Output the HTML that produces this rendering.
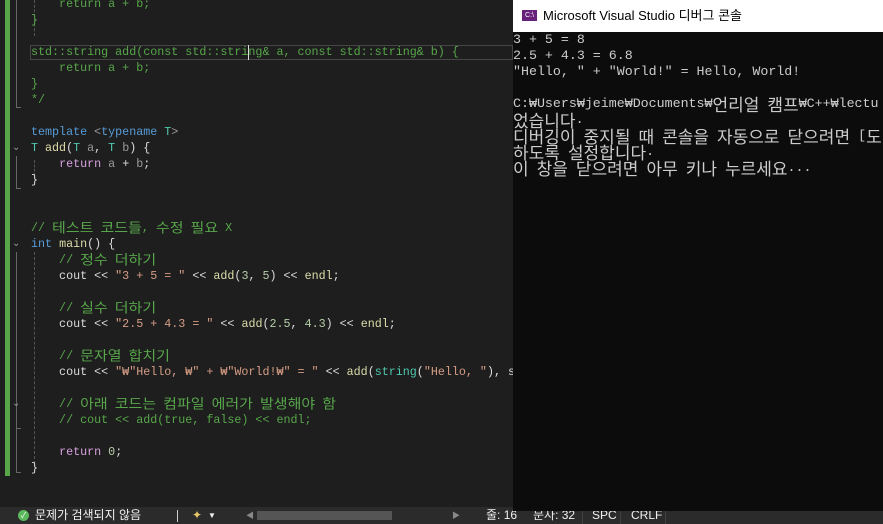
<!DOCTYPE html>
<html><head><meta charset="utf-8"><style>
*{margin:0;padding:0;box-sizing:border-box}
body{width:883px;height:524px;background:#1e1e1e;overflow:hidden;position:relative;font-family:"Liberation Mono","Noto Sans CJK KR",monospace}
.l{position:absolute;left:31px;white-space:pre;font-size:11.7px;line-height:16px;height:16px;color:#dcdcdc}
.k{font-family:"Noto Sans CJK KR",sans-serif;font-size:15px;line-height:16px;display:inline-block;height:16px;vertical-align:top;transform:scaleY(0.9)}
.c{color:#57a64a}.kw{color:#569cd6}.t{color:#4ec9b0}.f{color:#dcdcaa}.s{color:#d69d85}.p{color:#9a9a9a}.r{color:#d8a0df}.n{color:#b5cea8}
.bar{position:absolute;left:5px;top:0;width:5px;height:476px;background:#57a64a}
.vg{position:absolute;border-left:1px dashed #555}
.fold{position:absolute;left:16px;width:1px;background:#666}
.chev{position:absolute;left:12px;color:#999;font-size:10px;font-family:"DejaVu Sans",sans-serif}
#con{position:absolute;left:513px;top:0;width:370px;height:511px;background:#0c0c0c;overflow:hidden}
#tt{position:absolute;left:0;top:0;width:370px;height:32px;background:#fff;color:#000;font-family:"Liberation Sans","Noto Sans CJK KR",sans-serif;font-size:13px;line-height:32px;padding-left:30px}
#ico{position:absolute;left:9px;top:10px;width:15px;height:11px;background:#68217a;color:#fff;font-size:7px;line-height:11px;text-align:center;font-family:"Liberation Sans",sans-serif}
.cl{position:absolute;left:0;white-space:pre;color:#cccccc;font-size:13.3px;line-height:16px;height:16px}
.ck{font-family:"Noto Sans CJK KR",sans-serif;font-size:17px;line-height:16px;display:inline-block;height:16px;vertical-align:top}
#st{position:absolute;left:0;top:507px;width:883px;height:17px;background:#2b2b2b;color:#f1f1f1;font-family:"Liberation Sans","Noto Sans CJK KR",sans-serif;font-size:12px;line-height:17px}
#st span{position:absolute;top:0}
</style></head><body>
<div class="bar"></div>
<div class="fold" style="top:0;height:108px"></div><div style="position:absolute;left:16px;top:107px;width:5px;border-top:1px solid #666"></div>
<div class="fold" style="top:156px;height:33px"></div><div style="position:absolute;left:16px;top:188px;width:5px;border-top:1px solid #666"></div>
<div class="fold" style="top:252px;height:220px"></div><div style="position:absolute;left:16px;top:472px;width:5px;border-top:1px solid #666"></div>
<div class="fold" style="top:412px;height:36px"></div><div style="position:absolute;left:16px;top:428px;width:5px;border-top:1px solid #666"></div>
<div class="vg" style="left:34px;top:0;height:36px"></div>
<div class="vg" style="left:34px;top:160px;height:16px"></div>
<div class="vg" style="left:34px;top:252px;height:212px"></div>
<div class="chev" style="top:142px">&#8964;</div>
<div class="chev" style="top:238px">&#8964;</div>
<div class="chev" style="top:398px">&#8964;</div>
<div style="position:absolute;left:30px;top:45px;width:483px;height:15px;border:1px solid #464646"></div>
<div style="position:absolute;left:248px;top:45px;width:1px;height:15px;background:#dcdcdc"></div>

<div class="l c" style="top:-4px">    return a + b;</div>
<div class="l c" style="top:12px">}</div>
<div class="l c" style="top:44px">std::string add(const std::string&amp; a, const std::string&amp; b) {</div>
<div class="l c" style="top:60px">    return a + b;</div>
<div class="l c" style="top:76px">}</div>
<div class="l c" style="top:92px">*/</div>
<div class="l" style="top:124px"><span class="kw">template</span> <span class="p">&lt;</span><span class="kw">typename</span> <span class="t">T</span><span class="p">&gt;</span></div>
<div class="l" style="top:140px"><span class="t">T</span> <span class="f">add</span>(<span class="t">T</span> <span class="p">a</span>, <span class="t">T</span> <span class="p">b</span>) {</div>
<div class="l" style="top:156px">    <span class="r">return</span> <span class="p">a</span> + <span class="p">b</span>;</div>
<div class="l" style="top:172px">}</div>
<div class="l c" style="top:220px">// <span class="k">테스트</span> <span class="k">코드들</span>, <span class="k">수정</span> <span class="k">필요</span> X</div>
<div class="l" style="top:236px"><span class="kw">int</span> <span class="f">main</span>() {</div>
<div class="l c" style="top:252px">    // <span class="k">정수</span> <span class="k">더하기</span></div>
<div class="l" style="top:268px">    cout &lt;&lt; <span class="s">"3 + 5 = "</span> &lt;&lt; <span class="f">add</span>(<span class="n">3</span>, <span class="n">5</span>) &lt;&lt; <span class="f">endl</span>;</div>
<div class="l c" style="top:300px">    // <span class="k">실수</span> <span class="k">더하기</span></div>
<div class="l" style="top:316px">    cout &lt;&lt; <span class="s">"2.5 + 4.3 = "</span> &lt;&lt; <span class="f">add</span>(<span class="n">2.5</span>, <span class="n">4.3</span>) &lt;&lt; <span class="f">endl</span>;</div>
<div class="l c" style="top:348px">    // <span class="k">문자열</span> <span class="k">합치기</span></div>
<div class="l" style="top:364px">    cout &lt;&lt; <span class="s">"₩"Hello, ₩" + ₩"World!₩" = "</span> &lt;&lt; <span class="f">add</span>(<span class="t">string</span>(<span class="s">"Hello, "</span>), s</div>
<div class="l c" style="top:396px">    // <span class="k">아래</span> <span class="k">코드는</span> <span class="k">컴파일</span> <span class="k">에러가</span> <span class="k">발생해야</span> <span class="k">함</span></div>
<div class="l c" style="top:412px">    // cout &lt;&lt; add(true, false) &lt;&lt; endl;</div>
<div class="l" style="top:444px">    <span class="r">return</span> <span class="n">0</span>;</div>
<div class="l" style="top:460px">}</div>

<div id="con">
<div id="tt"><div id="ico">C:\</div>Microsoft Visual Studio 디버그 콘솔</div>
<div class="cl" style="top:32px">3 + 5 = 8</div>
<div class="cl" style="top:48px">2.5 + 4.3 = 6.8</div>
<div class="cl" style="top:64px">"Hello, " + "World!" = Hello, World!</div>
<div class="cl" style="top:96px">C:₩Users₩jeime₩Documents₩<span class="ck">언리얼</span> <span class="ck">캠프</span>₩C++₩lectu</div>
<div class="cl" style="top:112px"><span class="ck">었습니다</span>.</div>
<div class="cl" style="top:128px"><span class="ck">디버깅이</span> <span class="ck">중지될</span> <span class="ck">때</span> <span class="ck">콘솔을</span> <span class="ck">자동으로</span> <span class="ck">닫으려면</span> [<span class="ck">도</span></div>
<div class="cl" style="top:144px"><span class="ck">하도록</span> <span class="ck">설정합니다</span>.</div>
<div class="cl" style="top:160px"><span class="ck">이</span> <span class="ck">창을</span> <span class="ck">닫으려면</span> <span class="ck">아무</span> <span class="ck">키나</span> <span class="ck">누르세요</span>...</div>
</div>

<div id="st">
<span style="left:18px;top:3px;width:11px;height:11px;border-radius:50%;background:#5cb85c;color:#fff;font-size:8px;line-height:11px;text-align:center">✓</span>
<span style="left:35px">문제가 검색되지 않음</span>
<span style="left:177px;top:3px;width:1px;height:12px;background:#ccc"></span>
<span style="left:192px;color:#e8c66a">✦</span><span style="left:208px;font-size:8px">▼</span>
<span style="left:246px;font-size:8px;color:#888">◀</span>
<span style="left:257px;top:4px;width:135px;height:9px;background:#555"></span>
<span style="left:452px;font-size:8px;color:#888">▶</span>
<span style="left:486px">줄: 16</span>
<span style="left:533px">문자: 32</span>
<span style="left:582px;width:1px;height:17px;background:#3f3f3f"></span>
<span style="left:592px">SPC</span>
<span style="left:620px;width:1px;height:17px;background:#3f3f3f"></span>
<span style="left:631px">CRLF</span>
<span style="left:665px;width:1px;height:17px;background:#3f3f3f"></span>
</div>
<div style="position:absolute;left:513px;top:507px;width:370px;height:4px;background:#0c0c0c"></div>
</body></html>
